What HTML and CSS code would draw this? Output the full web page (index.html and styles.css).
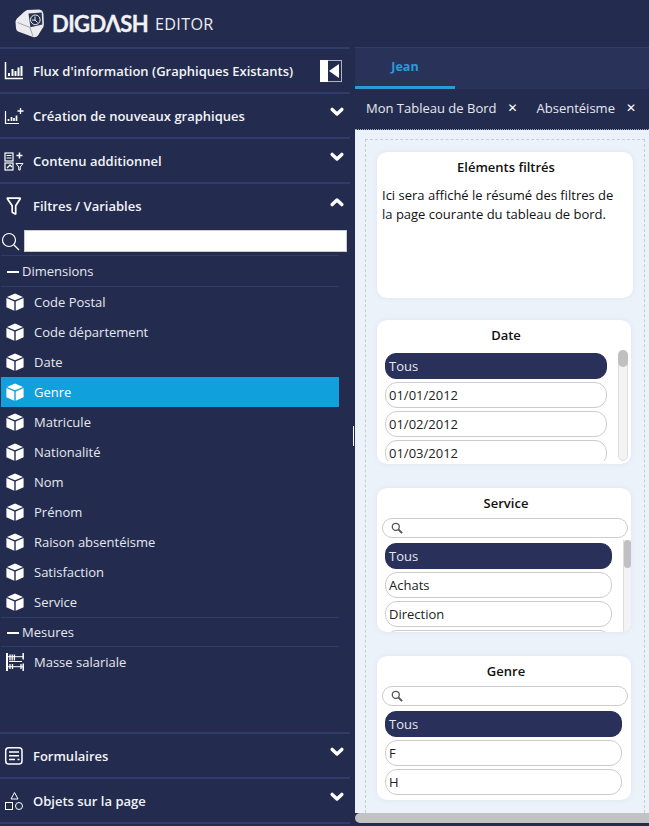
FILE: index.html
```html
<!DOCTYPE html>
<html lang="fr">
<head>
<meta charset="utf-8">
<title>DigDash Editor</title>
<link rel="stylesheet" href="styles.css">
</head>
<body>
<svg class="defs" width="0" height="0" aria-hidden="true">
  <symbol id="cube" viewBox="0 0 18 18">
    <path fill="#fff" d="M9 .4 17 3.900 9 7.200 1 3.900zM.4 5.100l7.900 3.300v9.400L.4 14.200zM17.600 5.100v9.100l-7.900 3.600V8.400z"/>
  </symbol>
  <symbol id="chev" viewBox="0 0 14 10">
    <path fill="none" stroke="#fff" stroke-width="3.400" stroke-linecap="round" stroke-linejoin="round" d="M2.200 2.400 7 7l4.800-4.600"/>
  </symbol>
  <symbol id="mag" viewBox="0 0 12 12">
    <circle cx="4.800" cy="4.800" r="3.500" fill="none" stroke="#555" stroke-width="1.300"/>
    <path d="m7.500 7.500 3.600 3.600" stroke="#555" stroke-width="1.800"/>
  </symbol>
</svg>
<div class="app">
  <header class="topbar">
    <svg class="logo" width="29" height="29" viewBox="0 0 29 29">
      <path fill="#ececee" d="M12 1 24 .5Q28 .8 28.400 5L28.900 15Q29 18 27 20L23 26.500Q21 29 18 28L3 22.500Q1 21.500 1 19L.5 13Q.5 11 2 9.500L9 3Z"/>
      <path fill="#2c3556" d="M13.500 4.500 26.700 3.500l.7 12-12 2.700z"/>
      <circle cx="20.300" cy="10.800" r="4.800" fill="#232c4f" stroke="#ececee" stroke-width="1"/>
      <path d="M20 7.500v3.600h-3M20 11.100l2.600 2.400" stroke="#ececee" stroke-width="1" fill="none"/>
      <path d="M15 18.500 2.500 13.500M15 18.500l3 9" stroke="#8d92a6" stroke-width=".8" fill="none"/>
    </svg>
    <span class="brand">DIGDΛSH</span>
    <span class="product">EDITOR</span>
  </header>
  <div class="body">
    <aside class="sidebar">
      <div class="acc">
        <svg class="acc-ico" width="20" height="20" viewBox="0 0 20 20" fill="none" stroke="#fff"><path d="M1.500 1V17.500H19" stroke-width="1.500"/><path d="M5 15v-3M8.500 15V8M11.500 15v-5M14.500 15V6.500M17.500 15V5" stroke-width="2"/></svg>
        <span class="acc-title">Flux d'information (Graphiques Existants)</span>
        <span class="collapse"><i class="collapse-l"></i><i class="collapse-r"><b class="tri"></b></i></span>
      </div>
      <div class="acc">
        <svg class="acc-ico" width="20" height="20" viewBox="0 0 20 20" fill="none" stroke="#fff"><path d="M1.500 5V17.500H15" stroke-width="1.200"/><path d="M4.500 15v-2M7.500 15v-4M10 15v-3M12.500 15V9.500" stroke-width="1.700"/><path d="M16.500 2v6M13.500 5h6" stroke-width="1.300"/></svg>
        <span class="acc-title">Création de nouveaux graphiques</span>
        <svg class="chev" width="14" height="10"><use href="#chev"/></svg>
      </div>
      <div class="acc">
        <svg class="acc-ico" width="20" height="20" viewBox="0 0 20 20" fill="none" stroke="#fff"><rect x="1" y="2" width="8" height="8" stroke-width="1.200"/><path d="M2.500 4.500h5M2.500 7h5" stroke-width="1"/><path d="M15.500 1.500v6M12.500 4.500h6" stroke-width="1.500"/><rect x="1" y="12" width="8" height="7" stroke-width="1.200"/><path d="m3 17 3-3 2 2" stroke-width="1.400"/><path d="M12 12.500h7l-2.800 3.500v3h-1.400v-3z" stroke-width="1"/></svg>
        <span class="acc-title">Contenu additionnel</span>
        <svg class="chev" width="14" height="10"><use href="#chev"/></svg>
      </div>
      <div class="acc">
        <svg class="acc-ico" width="20" height="20" viewBox="0 0 20 20" fill="none" stroke="#fff" stroke-width="1.700"><path d="M3 2.200h13.500l-4.800 7.500v8.500L8.200 16.300V9.700z" stroke-linejoin="bevel"/></svg>
        <span class="acc-title">Filtres / Variables</span>
        <svg class="chev up" width="14" height="10"><use href="#chev"/></svg>
      </div>
      <div class="tree-search">
        <svg width="19" height="19" viewBox="0 0 19 19" fill="none" stroke="#fff" stroke-width="1.200"><circle cx="8" cy="8" r="6.500"/><path d="m13 13 5 5"/></svg>
        <div class="tree-input"></div>
      </div>
      <div class="tree">
        <div class="group"><i class="dash"></i>Dimensions</div>
        <div class="item"><svg width="18" height="18"><use href="#cube"/></svg><span>Code Postal</span></div>
        <div class="item"><svg width="18" height="18"><use href="#cube"/></svg><span>Code département</span></div>
        <div class="item"><svg width="18" height="18"><use href="#cube"/></svg><span>Date</span></div>
        <div class="item active"><svg width="18" height="18"><use href="#cube"/></svg><span>Genre</span></div>
        <div class="item"><svg width="18" height="18"><use href="#cube"/></svg><span>Matricule</span></div>
        <div class="item"><svg width="18" height="18"><use href="#cube"/></svg><span>Nationalité</span></div>
        <div class="item"><svg width="18" height="18"><use href="#cube"/></svg><span>Nom</span></div>
        <div class="item"><svg width="18" height="18"><use href="#cube"/></svg><span>Prénom</span></div>
        <div class="item"><svg width="18" height="18"><use href="#cube"/></svg><span>Raison absentéisme</span></div>
        <div class="item"><svg width="18" height="18"><use href="#cube"/></svg><span>Satisfaction</span></div>
        <div class="item"><svg width="18" height="18"><use href="#cube"/></svg><span>Service</span></div>
        <div class="group ruled"><i class="dash"></i>Mesures</div>
        <div class="item"><svg width="18" height="18" viewBox="0 0 18 18" fill="none" stroke="#fff"><path d="M1 0v18" stroke-width="2"/><path d="M2 3.700h15M3 8.500h13M2 13.700h15" stroke-width="1"/><path d="M4 1.500v6M6.200 1.500v6M8.400 1.500v6M4 11v5M6.500 11v5M15 11v5" stroke-width="1.300"/><path d="M17.200 0v6.500M17.200 10.500V18" stroke-width="1.500"/></svg><span>Masse salariale</span></div>
      </div>
      <div class="acc bottom">
        <svg class="acc-ico" width="20" height="20" viewBox="0 0 20 20" fill="none" stroke="#fff"><rect x="1.700" y="1.700" width="16.300" height="16.300" rx="3" stroke-width="1.500"/><path d="M5 6h10M5 9.700h10M5 13.500h6M13.500 13.500h2" stroke-width="1.500"/></svg>
        <span class="acc-title">Formulaires</span>
        <svg class="chev" width="14" height="10"><use href="#chev"/></svg>
      </div>
      <div class="acc">
        <svg class="acc-ico" width="20" height="20" viewBox="0 0 20 20" fill="none" stroke="#fff" stroke-width="1"><path d="M10.500 1.500 14 8H7z"/><rect x="1.500" y="11.500" width="7" height="7"/><circle cx="15" cy="15" r="3.500"/></svg>
        <span class="acc-title">Objets sur la page</span>
        <svg class="chev" width="14" height="10"><use href="#chev"/></svg>
      </div>
      <div class="acc-end"></div>
    </aside>
    <i class="splitter"></i>
    <main class="main">
      <nav class="tabs-user"><a class="tab-user">Jean</a></nav>
      <nav class="tabs-page">
        <span class="tab-page">Mon Tableau de Bord<b class="x">✕</b></span>
        <span class="tab-page">Absentéisme<b class="x">✕</b></span>
      </nav>
      <div class="canvas">
        <div class="dashed">
          <section class="card summary">
            <h3>Eléments filtrés</h3>
            <p>Ici sera affiché le résumé des filtres de la page courante du tableau de bord.</p>
          </section>
          <section class="card date">
            <h3>Date</h3>
            <div class="listwrap">
              <div class="list">
                <div class="opt sel">Tous</div>
                <div class="opt">01/01/2012</div>
                <div class="opt">01/02/2012</div>
                <div class="opt">01/03/2012</div>
              </div>
              <div class="sb"><i class="thumb"></i></div>
            </div>
          </section>
          <section class="card service">
            <h3>Service</h3>
            <div class="search"><svg width="12" height="12"><use href="#mag"/></svg></div>
            <div class="listwrap">
              <div class="list">
                <div class="opt sel">Tous</div>
                <div class="opt">Achats</div>
                <div class="opt">Direction</div>
                <div class="opt"></div>
              </div>
              <div class="sb"><i class="thumb"></i></div>
            </div>
          </section>
          <section class="card genre">
            <h3>Genre</h3>
            <div class="search"><svg width="12" height="12"><use href="#mag"/></svg></div>
            <div class="list">
              <div class="opt sel">Tous</div>
              <div class="opt">F</div>
              <div class="opt">H</div>
            </div>
          </section>
        </div>
      </div>
      <div class="hscroll"></div>
    </main>
  </div>
</div>
</body>
</html>
```

FILE: styles.css
```css
* { box-sizing: border-box; }
html, body { margin: 0; height: 100%; overflow: hidden; }
body { background: #232c4f; font-family: "Open Sans", "Liberation Sans", sans-serif; color: #fff; }
.defs { position: absolute; }
.app { height: 826px; display: flex; flex-direction: column; }

.topbar { height: 47px; display: flex; align-items: center; padding-left: 15px; flex: none; }
.logo { margin-right: 8px; flex: none; }
.brand { font-family: Lato, "Open Sans", sans-serif; font-weight: 700; font-size: 22px; letter-spacing: -.6px; color: #f2f2f4; -webkit-text-stroke: .3px #f2f2f4; }
.product { font-size: 16.200px; margin-left: 7px; color: #eceded; letter-spacing: .3px; }

.body { display: flex; flex: 1; min-height: 0; position: relative; }
.sidebar { width: 350px; flex: none; display: flex; flex-direction: column; padding-bottom: 2px; }
.acc { height: 45px; flex: none; display: flex; align-items: center; padding: 0 6px 0 4px; border-top: 2px solid #303c6c; }
.acc-ico { flex: none; margin-right: 9px; }
.acc-title { flex: 1; font-size: 13px; font-weight: 600; color: #f3f4f7; white-space: nowrap; }
.chev { flex: none; margin-top: -7px; }
.chev.up { transform: scaleY(-1); }
.acc-end { border-top: 2px solid #303c6c; }
.collapse { display: flex; width: 22px; height: 22px; margin-right: 2px; flex: none; }
.collapse-l { width: 8px; background: #fff; }
.collapse-r { flex: 1; border: 1px solid #aeb4c6; border-left: 0; display: flex; align-items: center; justify-content: center; }
.tri { border-right: 10px solid #fff; border-top: 7px solid transparent; border-bottom: 7px solid transparent; margin-left: -1px; }

.tree-search { height: 28px; flex: none; margin-left: 1px; width: 346px; display: flex; align-items: center; gap: 4px; }
.tree-input { width: 323px; height: 22px; background: #fff; border: 1px solid #ccc; }
.tree { flex: 1; width: 338px; margin-left: 1px; min-height: 0; }
.group { height: 32px; display: flex; align-items: center; font-size: 13px; color: #e6e8ee; border-top: 1px solid #303c6c; border-bottom: 1px solid #303c6c; padding-left: 6px; }
.group.ruled { height: 30px; }
.dash { width: 12px; height: 2px; background: #fff; margin-right: 3px; margin-top: 2px; }
.item { height: 30px; display: flex; align-items: center; padding-left: 5px; font-size: 13px; color: #e6e8ee; }
.item svg { flex: none; margin-right: 10px; }
.item.active { background: #10a0dc; color: #fff; }
.bottom { margin-top: auto; }

.splitter { position: absolute; left: 353px; top: 379px; width: 1px; height: 20px; background: #fff; }

.main { margin-left: 5px; flex: 1; min-width: 0; display: flex; flex-direction: column; }
.tabs-user { height: 42px; flex: none; background: #29335a; border-top: 1px solid #303c6c; }
.tab-user { display: block; width: 100px; height: 41px; border-bottom: 3px solid #2c9ad6; text-align: center; font-size: 12.500px; font-weight: 700; color: #2c9ad6; line-height: 37px; }
.tabs-page { height: 41px; flex: none; display: flex; align-items: center; background: #232c4f; padding: 0 0 2px 11px; gap: 19px; white-space: nowrap; font-size: 13px; color: #e6e8ee; border-bottom: 1px dotted #9ea6bb; }
.tab-page { display: flex; align-items: center; }
.x { font-size: 12px; margin-left: 11px; color: #fff; font-family: "DejaVu Sans", sans-serif; font-weight: 700; }
.canvas { flex: 1; min-height: 0; background: #ecf2fa; padding: 9px 4px 0 10px; overflow: hidden; }
.dashed { border: 1px dashed #c9ccd1; border-bottom: 0; height: 100%; padding: 12px 11px 0 11px; overflow: hidden; }
.card { background: #fff; border-radius: 10px; color: #111; box-shadow: 0 0 4px rgba(180,190,210,.25); width: 254px; height: 144px; margin-bottom: 24px; overflow: hidden; }
.card h3 { margin: 0; font-size: 13px; font-weight: 600; text-align: center; line-height: 18px; padding: 6px 0 0 4px; height: 25px; }
.summary { width: 256px; height: 146px; margin-bottom: 22px; }
.summary h3 { padding-left: 2px; }
.summary p { margin: 9px 0 0 5px; font-size: 13px; line-height: 18.500px; width: 240px; }
.service h3, .genre h3 { height: 30px; }
.date h3 { height: 30px; }
.search { height: 20px; width: 246px; margin-left: 5px; border: 1px solid #ccc; border-radius: 10px; padding-left: 8px; display: flex; align-items: center; }
.listwrap { display: flex; overflow: hidden; }
.list { flex: 1; padding-left: 8px; min-width: 0; }
.date .listwrap { height: 111px; margin-right: 3px; }
.date .list { padding: 3px 11px 0 8px; }
.service .listwrap { height: 92px; margin-top: 2px; }
.service .list { padding: 3px 11px 0 8px; }
.genre .list { margin-top: 5px; padding-right: 9px; }
.opt { height: 26px; margin-bottom: 3px; border: 1px solid #ccc; border-radius: 12px; font-size: 13px; line-height: 24px; padding-left: 3px; color: #222; }
.opt.sel { background: #29305a; border-color: #29305a; color: #e6e8ee; border-radius: 11px; }
.sb { width: 10px; flex: none; border: 1px solid #ddd; border-radius: 5px; background: #f3f3f3; }
.service .sb { width: 8px; border-width: 0 0 0 1px; border-radius: 0; }
.thumb { display: block; height: 17px; margin: -1px; background: #c0c0c0; border-radius: 5px; }
.service .thumb { height: 28px; margin: 0; }
.hscroll { height: 10px; flex: none; background: #c2c2c2; border-radius: 5px 0 0 5px; margin-bottom: 3px; }
```
